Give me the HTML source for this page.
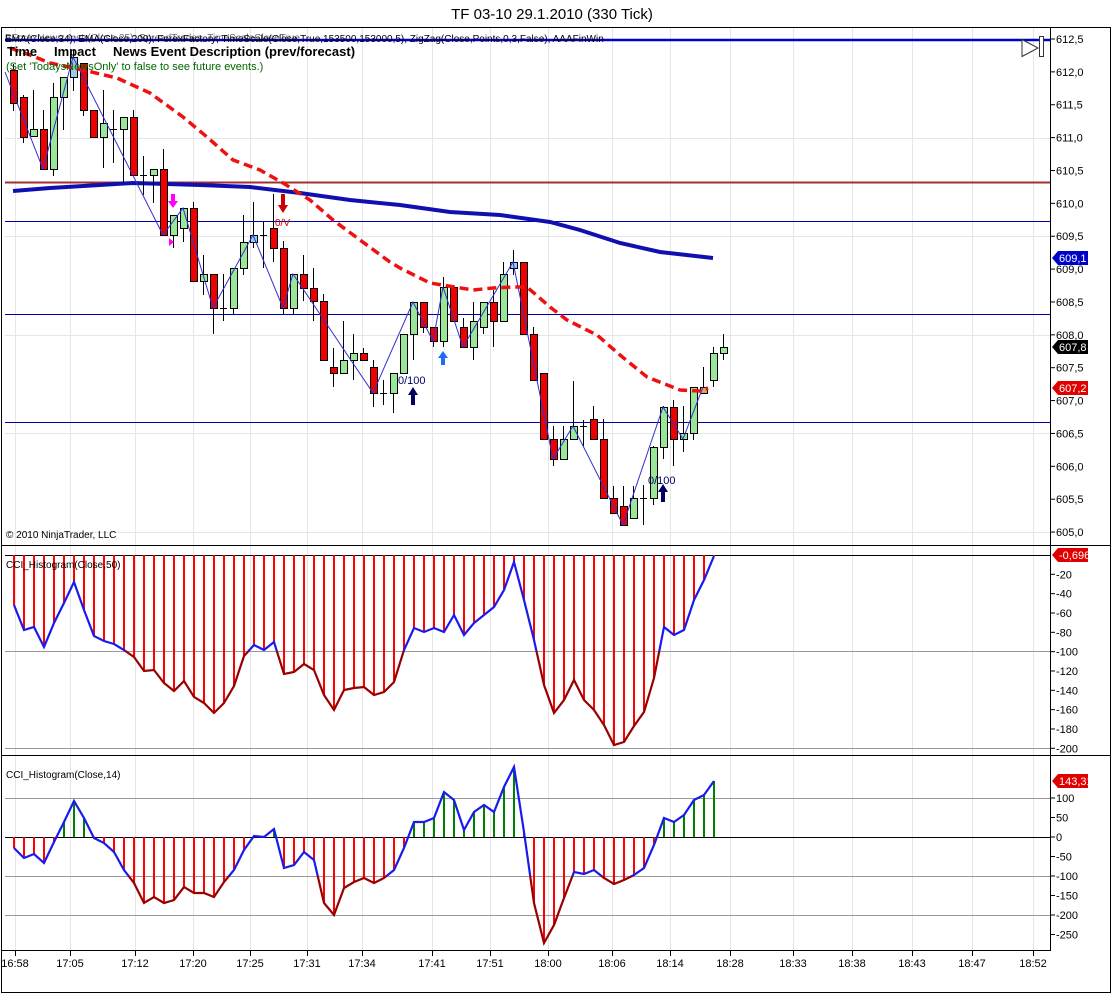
<!DOCTYPE html>
<html><head><meta charset="utf-8"><style>
html,body{margin:0;padding:0;background:#fff;width:1112px;height:994px;overflow:hidden}
svg{display:block;font-family:"Liberation Sans",Arial,sans-serif}
</style></head><body>
<svg id="s" width="1112" height="994" viewBox="0 0 1112 994" xmlns="http://www.w3.org/2000/svg">
<text x="552" y="19" font-size="15" text-anchor="middle" fill="#000">TF 03-10  29.1.2010 (330 Tick)</text>
<rect x="1.5" y="27.5" width="1109" height="965" fill="none" stroke="#000"/>
<g id="grid"></g>
<g id="main"></g>
</svg>
<script>
var g=document.getElementById('main'),gr=document.getElementById('grid');
var h='';
function L(x1,y1,x2,y2,c,w,extra){return '<line x1="'+x1+'" y1="'+y1+'" x2="'+x2+'" y2="'+y2+'" stroke="'+c+'" stroke-width="'+(w||1)+'" '+(extra||'')+'/>';}
function T(x,y,t,s,c,a,extra){return '<text x="'+x+'" y="'+y+'" font-size="'+s+'" fill="'+(c||'#000')+'"'+(a?' text-anchor="'+a+'"':'')+' '+(extra||'')+'>'+t+'</text>';}
var AX=1050;
var tl=[[15,'16:58'],[70,'17:05'],[135,'17:12'],[193,'17:20'],[250,'17:25'],[307,'17:31'],[362,'17:34'],[432,'17:41'],[490,'17:51'],[548,'18:00'],[612,'18:06'],[670,'18:14'],[730,'18:28'],[793,'18:33'],[852,'18:38'],[912,'18:43'],[972,'18:47'],[1033,'18:52']];
var gh='';
tl.forEach(function(t){gh+=L(t[0]+.5,28,t[0]+.5,950,'#e6e6e6',1);});
[138,236,335,433,532].forEach(function(y){gh+=L(5,y+.5,AX,y+.5,'#e6e6e6',1);});
gr.innerHTML=gh;
h+=L(1,545.5,1111,545.5,'#000',1)+L(1,755.5,1111,755.5,'#000',1);
h+=L(AX+.5,28,AX+.5,950,'#000',1)+L(1,950.5,AX+1,950.5,'#000',1);
tl.forEach(function(t){h+=L(t[0]+.5,950,t[0]+.5,956,'#000',1)+T(t[0],967,t[1],11,'#000','middle');});
var pl=['612,5','612,0','611,5','611,0','610,5','610,0','609,5','609,0','608,5','608,0','607,5','607,0','606,5','606,0','605,5','605,0'];
pl.forEach(function(p,i){var y=39+i*32.87;h+=L(AX,y,AX+5,y,'#000',1)+T(AX+6,y+4,p,11);});
h+=L(5,40,AX,40,'#0000cc',2.5)+L(5,182.5,AX,182.5,'#a03030',2)+L(5,221.5,AX,221.5,'#0000aa',1)+L(5,314.5,AX,314.5,'#0000aa',1)+L(5,422.5,AX,422.5,'#0000aa',1);
h+='<polyline fill="none" stroke="#1010b0" stroke-width="4" points="13,191 50,188 100,185 133,183 167,184 200,185 250,187 300,193 350,200 400,205 450,212 500,215 550,222 580,230 620,243 660,252 713,258"/>';
var C=[[13,'r',70,103,64,111],[23,'r',97,137,95,143],[33,'g',129,136,90,136],[43,'r',129,169,110,169],[53,'g',97,169,83,176],[63,'g',77,97,77,130],[73,'b',57,77,50,91],[83,'r',63,110,63,116],[93,'r',110,137,110,137],[103,'g',123,137,90,168],[113,'d',129,129,110,163],[123,'g',117,129,117,183],[133,'r',117,175,110,175],[143,'d',175,175,156,195],[153,'g',169,175,169,203],[163,'r',169,235,149,235],[173,'g',215,235,215,248],[183,'g',208,228,208,242],[193,'r',208,281,202,281],[203,'g',274,281,255,295],[213,'r',274,308,274,334],[223,'d',308,308,274,321],[233,'g',268,308,268,314],[243,'g',242,268,215,275],[253,'b',235,242,202,248],[263,'d',235,235,222,268],[273,'r',228,248,194,262],[283,'r',248,308,241,314],[293,'g',274,308,274,314],[303,'r',274,288,255,301],[313,'r',288,301,268,321],[323,'r',301,360,294,360],[333,'r',367,373,348,387],[343,'g',360,373,321,373],[353,'g',353,360,334,380],[363,'r',353,360,348,360],[373,'r',367,393,360,407],[383,'d',393,393,380,405],[393,'g',373,393,373,413],[403,'g',334,373,334,373],[413,'g',302,334,302,360],[423,'r',302,327,302,333],[433,'r',327,341,327,347],[443,'g',287,341,277,347],[453,'r',287,321,287,321],[463,'r',327,347,318,347],[473,'g',321,347,302,360],[483,'g',302,327,302,334],[493,'r',302,321,290,347],[503,'g',274,321,262,321],[513,'b',262,268,250,275],[523,'r',262,334,262,334],[533,'r',334,380,327,380],[543,'r',373,439,373,439],[553,'r',439,459,426,466],[563,'g',439,459,426,459],[573,'g',426,439,381,439],[583,'d',426,426,420,446],[593,'r',419,439,406,439],[603,'r',439,498,419,498],[613,'r',498,513,486,513],[623,'r',506,525,486,525],[633,'g',498,518,486,518],[643,'d',498,498,485,525],[653,'g',447,498,446,505],[663,'g',407,447,406,459],[673,'r',407,439,400,466],[683,'g',433,439,406,452],[693,'g',387,433,387,440],[703,'o',387,393,367,393],[713,'g',353,380,347,387],[723,'g',347,353,334,360]];
var col={r:'#ee0000',g:'#99e699',b:'#9ccde8',o:'#e0a060'};
C.forEach(function(c){var x=c[0];h+=L(x+.5,c[4],x+.5,c[5],'#000',1);
 if(c[1]=='d'){h+=L(x-3,c[2]+.5,x+4,c[2]+.5,'#000',1);}
 else{var y=c[2],hh=Math.max(c[3]-c[2],2);h+='<rect x="'+(x-3)+'.5" y="'+y+'.5" width="7" height="'+hh+'" fill="'+col[c[1]]+'" stroke="#000" stroke-width="1"/>';}});
h+='<polyline fill="none" stroke="#3030d0" stroke-width="1" points="5,72 43,169 73,57 163,235 183,208 213,308 253,235 283,308 293,274 373,393 413,302 433,341 443,287 463,347 513,262 553,459 573,426 623,525 663,407 683,439 703,387"/>';
h+='<polyline fill="none" stroke="#ee1111" stroke-width="3.5" stroke-dasharray="9,5" points="10,48 30,55 50,63 83,70 117,78 150,93 183,117 207,137 233,160 260,170 283,183 310,200 333,220 360,240 390,262 400,268 430,283 473,290 493,288 513,287 527,287 550,307 567,320 597,335 620,355 647,377 680,390 700,391 708,388"/>';
h+='<path d="M171,194h4v7h3l-5,7-5-7h3z" fill="#ff00ff"/><path d="M169,238l5,4-5,4z" fill="#ff00ff"/>';
h+='<path d="M281,194h4v11h3l-5,8-5-8h3z" fill="#cc0000"/>'+T(275,226,'0/V',10,'#cc0000');
h+='<path d="M441,365h4v-7h3l-5,-7-5,7h3z" fill="#1e6bff"/>';
h+='<path d="M411,405h4v-10h3l-5,-8-5,8h3z" fill="#000060"/>'+T(398,384,'0/100',11,'#000060');
h+='<path d="M661,502h4v-10h3l-5,-8-5,8h3z" fill="#000060"/>'+T(648,484,'0/100',11,'#000060');
function tag(y,txt,c,tc){return '<path d="M1052,'+y+'l6,-7h30v14h-30z" fill="'+c+'"/>'+T(1059,y+4,txt,11,tc||'#fff');}
h+=tag(258,'609,1','#0000cc')+tag(347,'607,8','#000')+tag(388,'607,2','#e00000')+tag(555,'-0,696','#e00000')+tag(781,'143,31','#e00000');
h+=T(5,42,'EMA(Close,34); EMA(Close,200); ForexFactory; TimeScale(Close,True,153500,153000,5), ZigZag(Close,Points,0,3,False), AAAFinWin',10,'#000');
h+=T(5,41,'BForexNews; Instr(Close,25); SpreadTrades, TimeScaleCloseTrue',10,'#000','','opacity=".6"');
h+=T(7,56,'Time',13,'#000','','font-weight="bold"')+T(54,56,'Impact',13,'#000','','font-weight="bold"')+T(113,56,'News Event Description (prev/forecast)',13,'#000','','font-weight="bold"');
h+=T(6,70,"(Set 'TodaysNewsOnly' to false to see future events.)",11,'#006600');
h+=T(6,538,'© 2010 NinjaTrader, LLC',10,'#000');
h+='<path d="M1022,39.5v17l16,-8.5z" fill="#fff" stroke="#333"/><rect x="1039.5" y="36.5" width="4" height="20" fill="#fff" stroke="#333"/>';
h+=L(5,555.5,AX,555.5,'#000',1)+L(5,651.5,AX,651.5,'#999',1)+L(5,748.5,AX,748.5,'#999',1);
for(var i=1;i<=10;i++){var y=555+i*19.33;h+=L(AX,y,AX+5,y,'#000',1)+T(AX+6,y+4,'-'+(i*20),11);}
var v50=[605,630,627,647,623,603,582,610,636,641,644,650,657,671,670,683,691,681,697,703,713,703,686,656,645,650,642,674,672,664,670,695,710,690,688,687,695,692,682,650,628,632,628,632,615,635,623,615,607,590,562,600,640,685,713,700,680,700,710,725,745,742,726,712,678,627,635,630,600,580,556];
function cci(v,zero,thr,top,bot,pos,id){var s='',pts='';v.forEach(function(y,i){var x=13+10*i;s+='<rect x="'+x+'" y="'+Math.min(zero,y)+'" width="2" height="'+Math.abs(y-zero)+'" fill="'+(y<zero?pos:'#ff0000')+'"/>';pts+=(x+1)+','+y+' ';});
 s+='<clipPath id="'+id+'a"><rect x="0" y="'+top+'" width="1112" height="'+(thr-top)+'"/></clipPath><clipPath id="'+id+'b"><rect x="0" y="'+thr+'" width="1112" height="'+(bot-thr)+'"/></clipPath>';
 s+='<polyline clip-path="url(#'+id+'a)" fill="none" stroke="#1a1aee" stroke-width="2.2" points="'+pts+'"/><polyline clip-path="url(#'+id+'b)" fill="none" stroke="#990000" stroke-width="2.2" points="'+pts+'"/>';return s;}
h+=cci(v50,555,651,546,755,'#ff0000','c1');
h+=T(6,568,'CCI_Histogram(Close,50)',10);
h+=L(5,798.5,AX,798.5,'#999',1)+L(5,837.5,AX,837.5,'#000',1)+L(5,876.5,AX,876.5,'#999',1)+L(5,915.5,AX,915.5,'#999',1);
['100','50','0','-50','-100','-150','-200','-250'].forEach(function(t,i){var y=798+i*19.5;h+=L(AX,y,AX+5,y,'#000',1)+T(AX+6,y+4,t,11);});
var v14=[848,858,854,863,842,822,801,818,838,843,852,870,883,903,897,903,900,887,893,893,897,882,870,850,836,837,829,868,865,852,860,903,915,888,882,878,883,878,870,848,822,822,818,792,800,830,812,805,812,787,767,832,903,943,925,898,872,874,870,878,884,880,875,868,845,818,822,815,800,795,781];
h+=cci(v14,837,876,756,950,'#008000','c2');
h+=T(6,778,'CCI_Histogram(Close,14)',10);
g.innerHTML=h;
</script>
</body></html>
